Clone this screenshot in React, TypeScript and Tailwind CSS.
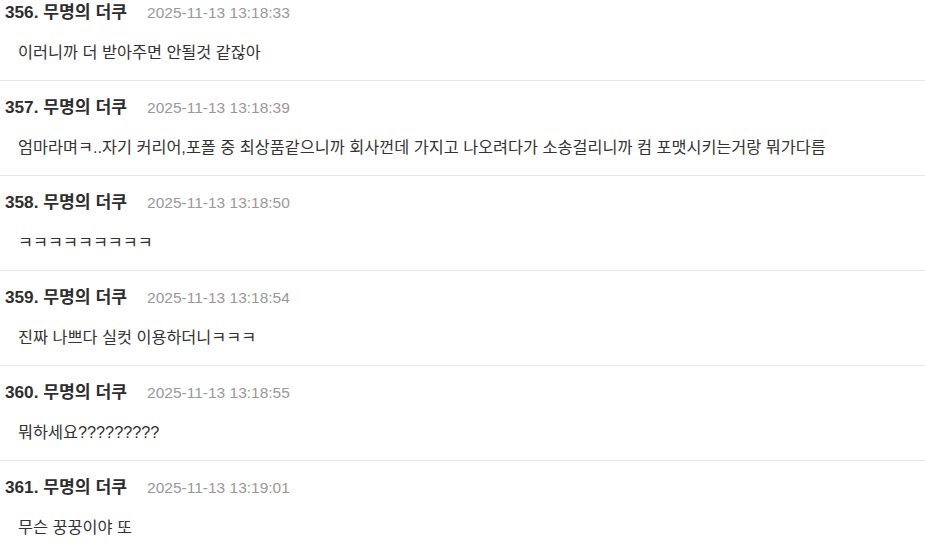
const comments = [
  { no: 356, date: "2025-11-13 13:18:33", text: "이러니까 더 받아주면 안될것 같잖아" },
  { no: 357, date: "2025-11-13 13:18:39", text: "엄마라며ㅋ..자기 커리어,포폴 중 최상품같으니까 회사껀데 가지고 나오려다가 소송걸리니까 컴 포맷시키는거랑 뭐가다름" },
  { no: 358, date: "2025-11-13 13:18:50", text: "ㅋㅋㅋㅋㅋㅋㅋㅋㅋ" },
  { no: 359, date: "2025-11-13 13:18:54", text: "진짜 나쁘다 실컷 이용하더니ㅋㅋㅋ" },
  { no: 360, date: "2025-11-13 13:18:55", text: "뭐하세요?????????" },
  { no: 361, date: "2025-11-13 13:19:01", text: "무슨 꿍꿍이야 또" },
];

export default function App() {
  return (
    <main
      className="w-[925px] h-[555px] overflow-hidden bg-white text-[#333]"
      style={{ fontFamily: '"Liberation Sans", "Noto Sans CJK KR", sans-serif' }}
    >
      <ul className="-mt-[14px]">
        {comments.map((c) => (
          <li key={c.no} className="pt-[16px] pb-[16px] border-b border-[#e6e6e6]">
            {/* 번호 + 닉네임 + 날짜 */}
            <div className="flex items-center h-[22px] pl-[5px]">
              <span className="text-[17.2px] font-bold text-[#2e2e2e]">
                {c.no}. 무명의 더쿠
              </span>
              <span className="ml-[20px] text-[15.5px] text-[#999]">{c.date}</span>
            </div>
            <p className="mt-[16px] h-[24px] leading-[24px] pl-[18px] text-[16.3px] text-[#333]">
              {c.text}
            </p>
          </li>
        ))}
      </ul>
    </main>
  );
}
